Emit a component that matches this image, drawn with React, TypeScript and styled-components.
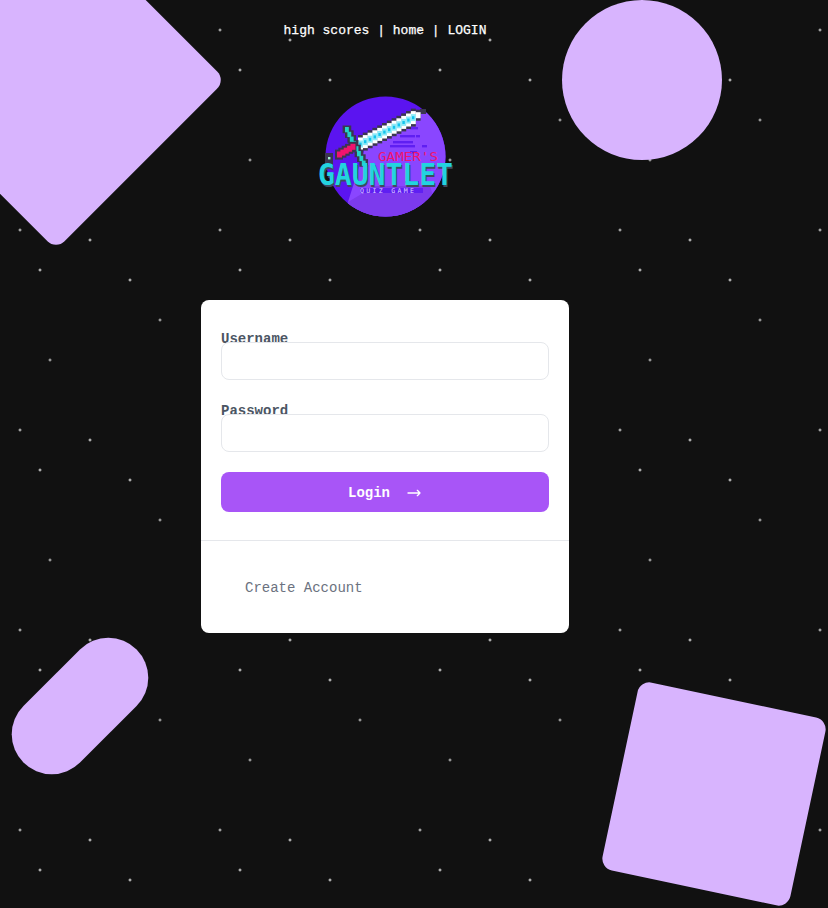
import React from 'react';
import styled, {createGlobalStyle} from 'styled-components';
import {HiOutlineArrowNarrowRight} from 'react-icons/hi';

const GlobalStyle = createGlobalStyle`
    html, body {
        margin: 0;
        padding: 0;
        background: #111111;
    }
    * {
        box-sizing: border-box;
    }
`;

const Page = styled.div`
    position: relative;
    display: flex;
    flex-direction: column;
    align-items: center;
    width: 100%;
    height: 908px;
    padding-right: 58px;
    overflow: hidden;
    font-family: "Liberation Mono", monospace;
    background-color: #111111;
    background-image:
        radial-gradient(2px 2px at 20px 30px, #eee, rgba(0, 0, 0, 0)),
        radial-gradient(2px 2px at 40px 70px, #fff, rgba(0, 0, 0, 0)),
        radial-gradient(2px 2px at 50px 160px, #ddd, rgba(0, 0, 0, 0)),
        radial-gradient(2px 2px at 90px 40px, #fff, rgba(0, 0, 0, 0)),
        radial-gradient(2px 2px at 130px 80px, #fff, rgba(0, 0, 0, 0)),
        radial-gradient(2px 2px at 160px 120px, #ddd, rgba(0, 0, 0, 0));
    background-size: 200px 200px;
`;

const Shape = styled.div<{$left: number; $top: number; $w: number; $h: number; $radius: number; $rotate: number}>`
    position: absolute;
    left: ${p => p.$left}px;
    top: ${p => p.$top}px;
    width: ${p => p.$w}px;
    height: ${p => p.$h}px;
    border-radius: ${p => p.$radius}px;
    background: #d8b4fe;
    transform: rotate(${p => p.$rotate}deg);
`;

const Nav = styled.nav`
    position: relative;
    display: flex;
    gap: 7.8px;
    margin-top: 23px;
    font-size: 13px;
    line-height: 16px;
    color: #fff;
    -webkit-text-stroke: 0.25px #fff;
`;

const NavLink = styled.a`
    color: #fff;
    text-decoration: none;
`;

const Logo = styled.svg`
    position: relative;
    display: block;
    width: 140px;
    height: 128px;
    margin-top: 53px;
`;

const Card = styled.div`
    position: relative;
    width: 368px;
    margin-top: 80px;
    background: #fff;
    border-radius: 8px;
`;

const Form = styled.form`
    display: flex;
    flex-direction: column;
    gap: 24px;
    padding: 32px 20px 28px;
    border-bottom: 1px solid #e5e7eb;
`;

const Field = styled.div`
    display: flex;
    flex-direction: column;
`;

const Label = styled.label`
    height: 10px;
    font-size: 14px;
    font-weight: 700;
    line-height: 14px;
    color: #4b5563;
`;

const Input = styled.input`
    position: relative;
    width: 100%;
    height: 38px;
    background: #fff;
    border: 1px solid #e5e7eb;
    border-radius: 8px;
    outline: none;
`;

const SubmitButton = styled.button`
    display: flex;
    justify-content: center;
    align-items: center;
    gap: 16px;
    width: 100%;
    height: 40px;
    margin-top: -4px;
    padding: 2px 0 0;
    font-family: inherit;
    font-size: 14px;
    font-weight: 700;
    color: #fff;
    background: #a855f7;
    border: none;
    border-radius: 8px;
`;

const Footer = styled.div`
    padding: 39px 44px 37px;
    font-size: 14px;
    line-height: 16px;
    color: #6b7280;
`;

const LogoText = styled.text<{$size: number; $weight: number}>`
    font-family: "DejaVu Sans Mono", monospace;
    font-size: ${p => p.$size}px;
    font-weight: ${p => p.$weight};
`;

// the logo is pixel art, so the sword is built up from stepped rows of cells
const CELL = 2.4;
const OUTLINE = '#3b3650';

const bladeSteps = Array.from({length: 13}, (_, i) => ({
    x: 358 + i * CELL * 2,
    y: 144 - i * CELL,
    dark: i === 12 ? 11 : 18,
    light: i === 12 ? 6 : 13,
}));

const guardSteps = Array.from({length: 8}, (_, i) => ({
    x: 345 + i * CELL,
    y: 127 + i * CELL * 2,
}));

const gripSteps = Array.from({length: 5}, (_, i) => ({
    x: 337 + i * CELL * 1.4,
    y: 152 - i * CELL * 0.8,
}));

const streaks = [
    [410, 127, 8], [400, 135, 15], [416, 135, 4], [393, 141, 20], [390, 145, 25],
    [422, 145, 5], [410, 151, 7], [360, 188, 63], [405, 181, 14],
];

const LogoMark: React.FunctionComponent = () => (
    <Logo viewBox="315 92 140 128">
        <defs>
            <clipPath id="logoCircle">
                <circle cx="385.5" cy="156.5" r="60"/>
            </clipPath>
        </defs>
        <circle cx="385.5" cy="156.5" r="60" fill="#5b14f0"/>
        <g clipPath="url(#logoCircle)">
            <path d="M424 108 L450 108 L450 220 L345 220 L348 202 L365 148 Z" fill="#8a46ff"/>
            <path d="M348 202 L375 186 L430 186 L440 220 L345 220 Z" fill="#7c3aed"/>
            {streaks.map(([x, y, w]) => (
                <rect key={`${x}-${y}`} x={x} y={y} width={w} height={y === 188 ? 5 : 2.4} fill="#5f1ff2"/>
            ))}
        </g>
        {bladeSteps.map(s => (
            <rect key={s.x} x={s.x} y={s.y - s.dark / 2} width={CELL * 2 + 0.2} height={s.dark} fill={OUTLINE}/>
        ))}
        <rect x="420" y="109" width="6" height="5" fill={OUTLINE}/>
        {bladeSteps.map(s => (
            <rect key={s.x} x={s.x} y={s.y - s.light / 2} width={CELL * 2 + 0.2} height={s.light} fill="#ffffff"/>
        ))}
        {bladeSteps.slice(0, 12).map(s => (
            <rect key={s.x} x={s.x} y={s.y - 3.5} width={CELL * 2 + 0.2} height={7} fill="#8eeaf8"/>
        ))}
        {bladeSteps.slice(0, 12).map(s => (
            <rect key={s.x} x={s.x + 1.2} y={s.y - 1.4} width={CELL} height={CELL + 0.6} fill="#12c4ee"/>
        ))}
        {guardSteps.map(s => (
            <rect key={s.y} x={s.x - CELL} y={s.y - 1.5} width={CELL * 3.6} height={CELL * 3.2} fill={OUTLINE}/>
        ))}
        {guardSteps.map(s => (
            <rect key={s.y} x={s.x} y={s.y} width={CELL * 1.6} height={CELL * 2.2} fill="#22d3c8"/>
        ))}
        <rect x="325" y="153" width="8" height="12" fill={OUTLINE}/>
        <rect x="328" y="157" width="2.4" height="2.4" fill="#a7f3d0"/>
        {gripSteps.map(s => (
            <rect key={s.x} x={s.x - 2} y={s.y - 2.4} width={8} height={10} fill={OUTLINE}/>
        ))}
        {gripSteps.map(s => (
            <rect key={s.x} x={s.x} y={s.y - 0.5} width={5} height={6} fill="#f0146e"/>
        ))}
        <LogoText x="378" y="161" $size={12.5} $weight={400} fill="#f0146e" textLength="60" lengthAdjust="spacingAndGlyphs">GAMER'S</LogoText>
        <LogoText x="319" y="186.5" $size={31} $weight={700} fill="#3f4a5e" textLength="135" lengthAdjust="spacingAndGlyphs">GAUNTLET</LogoText>
        <LogoText x="318" y="185" $size={31} $weight={700} fill="#22d3e0" textLength="135" lengthAdjust="spacingAndGlyphs">GAUNTLET</LogoText>
        <LogoText x="360" y="193" $size={6.5} $weight={400} fill="#dcd0ff" textLength="54" lengthAdjust="spacing">QUIZ GAME</LogoText>
    </Logo>
);

const App: React.FunctionComponent = () => (
    <>
        <GlobalStyle/>
        <Page>
            <Shape $left={-64} $top={-40.5} $w={240} $h={240} $radius={12} $rotate={45}/>
            <Shape $left={562} $top={0} $w={160} $h={160} $radius={80} $rotate={0}/>
            <Shape $left={0} $top={666} $w={160} $h={80} $radius={40} $rotate={-45}/>
            <Shape $left={618} $top={698} $w={192} $h={192} $radius={12} $rotate={12}/>
            <Nav>
                <NavLink href="#">high scores</NavLink>
                <span>|</span>
                <NavLink href="#">home</NavLink>
                <span>|</span>
                <NavLink href="#">LOGIN</NavLink>
            </Nav>
            <LogoMark/>
            <Card>
                <Form onSubmit={e => e.preventDefault()}>
                    <Field>
                        <Label>Username</Label>
                        <Input type="text"/>
                    </Field>
                    <Field>
                        <Label>Password</Label>
                        <Input type="password"/>
                    </Field>
                    <SubmitButton type="submit">
                        Login
                        <HiOutlineArrowNarrowRight size={16}/>
                    </SubmitButton>
                </Form>
                <Footer>Create Account</Footer>
            </Card>
        </Page>
    </>
);

export default App;
